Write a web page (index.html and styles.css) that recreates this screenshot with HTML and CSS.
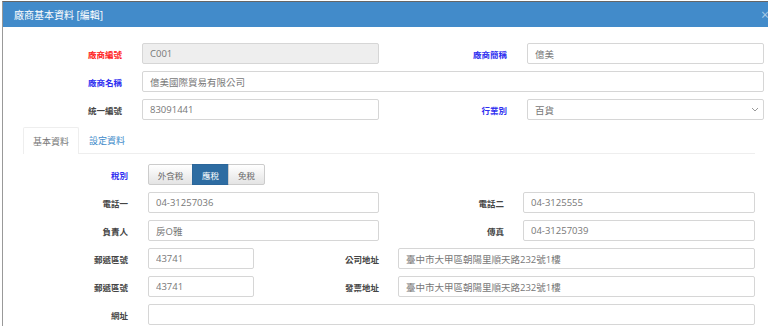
FILE: index.html
```html
<!DOCTYPE html>
<html lang="zh-Hant">
<head>
    <meta charset="UTF-8">
    <meta name="viewport" content="width=device-width, initial-scale=1.0">
    <title>廠商基本資料 [編輯]</title>
    <link rel="stylesheet" href="styles.css">
</head>
<body>
    <div class="modal">
        <div class="modal-header">
            <span class="modal-title">廠商基本資料 [編輯]</span>
            <span class="close">&times;</span>
        </div>
        <div class="modal-body">
            <div class="form-top">
                <label class="lbl red">廠商編號</label>
                <input class="ctl" type="text" value="C001" readonly>
                <label class="lbl blue">廠商簡稱</label>
                <input class="ctl" type="text" value="億美">

                <label class="lbl blue">廠商名稱</label>
                <input class="ctl wide" type="text" value="億美國際貿易有限公司">

                <label class="lbl">統一編號</label>
                <input class="ctl" type="text" value="83091441">
                <label class="lbl blue">行業別</label>
                <div class="ctl select">
                    <span>百貨</span>
                    <svg width="8" height="5" viewBox="0 0 8 5"><path d="M1 1l3 3 3-3" fill="none" stroke="#999" stroke-width="1"/></svg>
                </div>
            </div>

            <div class="tabs">
                <ul class="nav-tabs">
                    <li class="tab active">基本資料</li>
                    <li class="tab">設定資料</li>
                </ul>
                <div class="tab-pane">
                    <div class="row">
                        <label class="lbl blue">稅別</label>
                        <div class="btn-group">
                            <span class="btn">外含稅</span>
                            <span class="btn active">應稅</span>
                            <span class="btn">免稅</span>
                        </div>
                    </div>
                    <div class="row">
                        <label class="lbl">電話一</label>
                        <input class="ctl" type="text" value="04-31257036">
                        <label class="lbl">電話二</label>
                        <input class="ctl" type="text" value="04-3125555">
                    </div>
                    <div class="row">
                        <label class="lbl">負責人</label>
                        <input class="ctl" type="text" value="房O雅">
                        <label class="lbl">傳真</label>
                        <input class="ctl" type="text" value="04-31257039">
                    </div>
                    <div class="row addr">
                        <label class="lbl">郵遞區號</label>
                        <input class="ctl" type="text" value="43741">
                        <label class="lbl">公司地址</label>
                        <input class="ctl" type="text" value="臺中市大甲區朝陽里順天路232號1樓">
                    </div>
                    <div class="row addr">
                        <label class="lbl">郵遞區號</label>
                        <input class="ctl" type="text" value="43741">
                        <label class="lbl">發票地址</label>
                        <input class="ctl" type="text" value="臺中市大甲區朝陽里順天路232號1樓">
                    </div>
                    <div class="row">
                        <label class="lbl">網址</label>
                        <input class="ctl wide" type="text" value="">
                    </div>
                </div>
            </div>
        </div>
    </div>
</body>
</html>
```

FILE: styles.css
```css
html, body {
    overflow: hidden;
}
body {
    margin: 0;
    background-color: white;
    font-family: "Open Sans", "Noto Sans CJK TC", sans-serif;
    color: #333;
}
.modal {
    margin: 1px 0 0 2px;
    border-top: 1px solid #666;
    border-left: 1px solid #999;
    height: 330px;
}
.modal-header {
    display: flex;
    align-items: center;
    justify-content: space-between;
    height: 25px;
    background-color: #428bca;
    color: white;
    padding-left: 11px;
}
.modal-title {
    font-size: 10px;
}
.close {
    font-size: 14px;
    color: rgba(255, 255, 255, 0.55);
    margin-right: -1px;
    line-height: 1;
}
.modal-body {
    padding-top: 16px;
}
.form-top {
    display: grid;
    grid-template-columns: 139px 237px 148px 237px;
    row-gap: 7px;
}
.lbl {
    text-align: right;
    padding-right: 20px;
    align-self: center;
    font-size: 8.5px;
    font-weight: bold;
    color: #444;
}
.lbl.red {
    color: #f22;
}
.lbl.blue {
    color: #2f2ff0;
}
.ctl {
    box-sizing: border-box;
    height: 21px;
    margin: 0;
    border: 1px solid #d6d6d6;
    border-radius: 2px;
    padding: 0 7px;
    font-family: "Open Sans", "Noto Sans CJK TC", sans-serif;
    font-size: 9.5px;
    color: #777;
    background-color: white;
    outline: none;
    min-width: 0;
}
.ctl[readonly] {
    background-color: #eee;
}
.form-top .wide {
    grid-column: 2 / 5;
}
.select {
    display: flex;
    align-items: center;
    justify-content: space-between;
    padding-right: 4px;
}
.tabs {
    margin: 7px 13px 0 20px;
}
.nav-tabs {
    display: flex;
    list-style: none;
    margin: 0;
    padding: 0;
    border-bottom: 1px solid #eee;
}
.tab {
    height: 25px;
    padding: 0 9px;
    display: flex;
    align-items: center;
    font-size: 9px;
    color: #428bca;
    border: 1px solid transparent;
    border-bottom: none;
    margin-bottom: -1px;
}
.tab.active {
    color: #777;
    background-color: white;
    border-color: #eee;
    border-radius: 2px 2px 0 0;
    height: 26px;
}
.tab-pane {
    padding-top: 10px;
    display: flex;
    flex-direction: column;
    gap: 7px;
}
.row {
    display: grid;
    grid-template-columns: 125px 231px 144px 232px;
}
.row.addr {
    grid-template-columns: 125px 106px 144px 357px;
}
.row .lbl:nth-child(3) {
    padding-right: 19px;
}
.row .wide {
    grid-column: 2 / 5;
}
.btn-group {
    display: flex;
    height: 21px;
}
.btn {
    box-sizing: border-box;
    display: flex;
    align-items: center;
    justify-content: center;
    font-size: 8.5px;
    color: #666;
    background: linear-gradient(#fff, #e4e4e4);
    border: 1px solid #ccc;
    margin-left: -1px;
}
.btn:first-child {
    width: 45px;
    margin-left: 0;
    border-radius: 2px 0 0 2px;
}
.btn:nth-child(2) {
    width: 37px;
}
.btn:last-child {
    width: 37px;
    border-radius: 0 2px 2px 0;
}
.btn.active {
    background: #2d6ca2;
    border-color: #2b669a;
    color: white;
}
```
